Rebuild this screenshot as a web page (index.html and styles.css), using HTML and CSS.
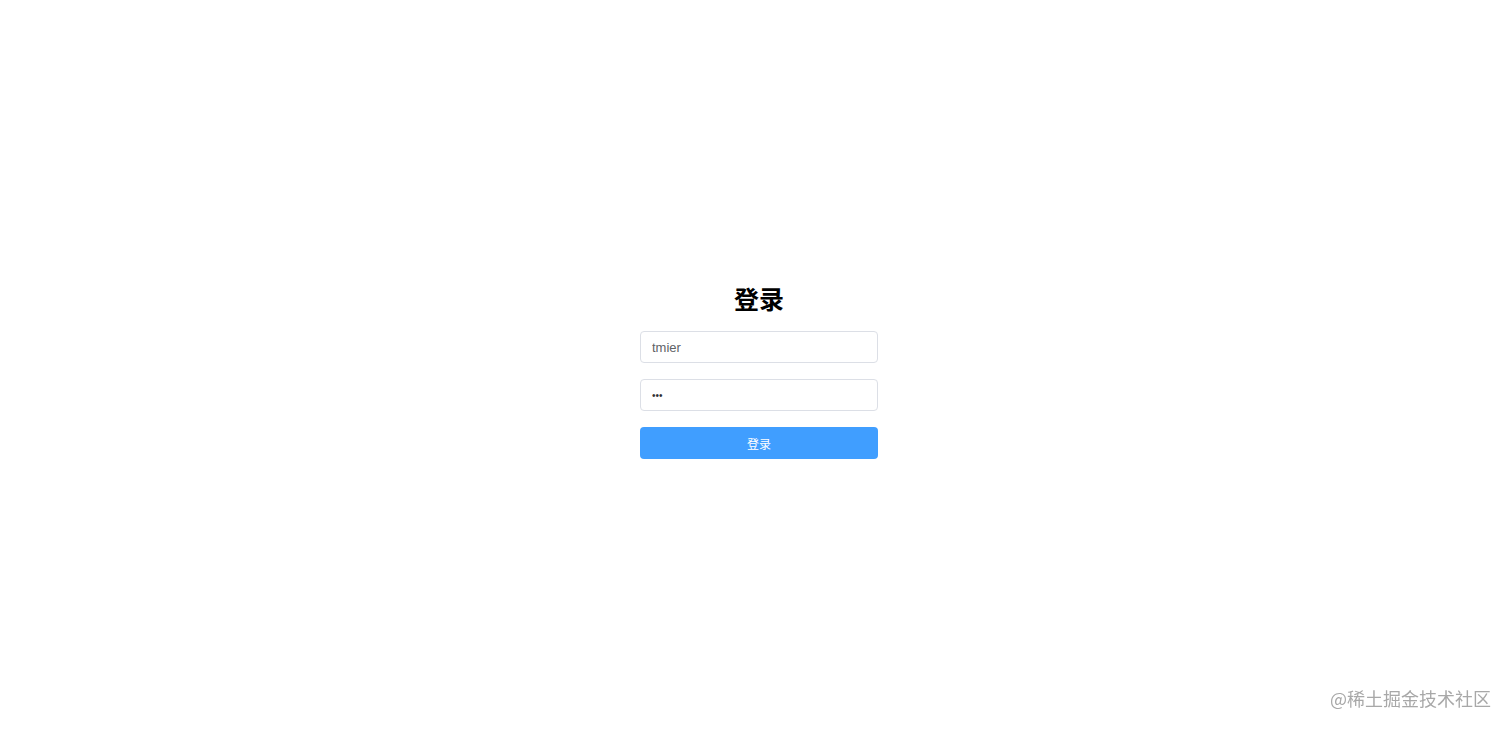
FILE: index.html
```html
<!DOCTYPE html>
<html lang="zh-CN">
<head>
<meta charset="utf-8">
<title>登录</title>
<link rel="stylesheet" href="styles.css">
</head>
<body>
<main class="page">
  <form class="login" onsubmit="return false">
    <h2 class="login-title">登录</h2>
    <div class="form-item">
      <input class="field" type="text" value="tmier">
    </div>
    <div class="form-item">
      <input class="field" type="password" value="123">
    </div>
    <button class="btn-primary" type="submit">登录</button>
  </form>
</main>
<div class="watermark">@稀土掘金技术社区</div>
</body>
</html>
```
FILE: styles.css
```css
html, body {
  margin: 0;
  padding: 0;
  background: #ffffff;
  height: 100%;
}
body {
  font-family: "Liberation Sans", Arial, "Noto Sans CJK SC", sans-serif;
  color: #303133;
}
.page {
  display: flex;
  justify-content: center;
  padding-top: 280px;
  padding-left: 6px;
}
.login {
  width: 238px;
  display: flex;
  flex-direction: column;
}
.login-title {
  margin: 0 0 15px;
  font-size: 25px;
  line-height: 36px;
  font-weight: 700;
  text-align: center;
  color: #000;
  font-family: "Noto Sans CJK SC", sans-serif;
}
.form-item {
  margin-bottom: 16px;
}
.field {
  box-sizing: border-box;
  width: 100%;
  height: 32px;
  padding: 0 11px;
  border: 1px solid #dcdfe6;
  border-radius: 4px;
  font-family: "Liberation Sans", Arial, sans-serif;
  font-size: 13px;
  color: #606266;
  background: #fff;
  outline: none;
}
.field[type="password"] {
  color: #303133;
  font-size: 10px;
}
.btn-primary {
  height: 32px;
  width: 100%;
  border: none;
  border-radius: 4px;
  background: #409eff;
  color: #fff;
  font-size: 12px;
  font-family: "Noto Sans CJK SC", sans-serif;
  cursor: pointer;
  padding: 0;
}
.watermark {
  position: fixed;
  right: 21px;
  bottom: 20px;
  font-size: 18px;
  line-height: 24px;
  color: #a8a8a8;
  font-family: "Noto Sans CJK SC", sans-serif;
}
```
